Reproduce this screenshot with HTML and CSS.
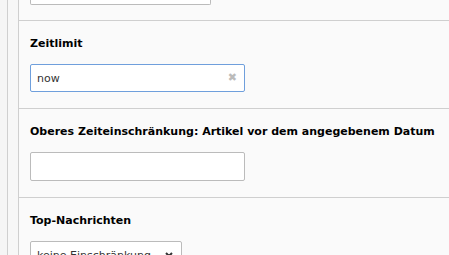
FILE: index.html
```html
<!DOCTYPE html>
<html lang="de">
<head>
    <meta charset="UTF-8">
    <title>Einstellungen</title>
    <link rel="stylesheet" href="styles.css">
</head>
<body>
    <div class="layout">
        <div class="rail"></div>
        <div class="rail inner"></div>
        <div class="form">
            <div class="section first">
                <div class="field empty top"></div>
            </div>
            <div class="section">
                <label for="limit">Zeitlimit</label>
                <div class="field active">
                    <input id="limit" type="text" value="now">
                    <span class="clear">&#10006;</span>
                </div>
            </div>
            <div class="section">
                <label for="upper">Oberes Zeiteinschränkung: Artikel vor dem angegebenem Datum</label>
                <div class="field">
                    <input id="upper" type="text" value="">
                </div>
            </div>
            <div class="section last">
                <label for="top">Top-Nachrichten</label>
                <div class="select">
                    <span>keine Einschränkung</span>
                    <svg width="8" height="6" viewBox="0 0 8 6"><path d="M1 1 L4 4 L7 1" fill="none" stroke="#333" stroke-width="2"/></svg>
                </div>
            </div>
        </div>
    </div>
</body>
</html>
```

FILE: styles.css
```css
body {
    margin: 0;
    background: #fafafa;
    font-family: "DejaVu Sans", Verdana, sans-serif;
    color: #000;
    overflow: hidden;
}
.layout {
    display: flex;
    height: 255px;
    overflow: hidden;
}
.rail {
    width: 7px;
    border-right: 1px solid #cfcfcf;
    background: #f5f5f5;
}
.rail.inner {
    width: 10px;
    background: #f7f7f7;
}
.form {
    flex: 1;
}
.section {
    padding: 16px 0 16px 11px;
    border-bottom: 1px solid #cfcfcf;
}
.section.first {
    padding-top: 0;
    height: 5px;
    padding-bottom: 15px;
}
.field.top {
    width: 179px;
    height: 4px;
    border: 1px solid #bbb;
    border-top: none;
    border-radius: 0 0 2px 2px;
    background: #fff;
}
label {
    display: block;
    font-size: 11px;
    font-weight: bold;
    line-height: 14px;
    margin-bottom: 13px;
    white-space: nowrap;
}
.field {
    position: relative;
    width: 215px;
}
.field input {
    box-sizing: border-box;
    width: 215px;
    height: 29px;
    border: 1px solid #bbb;
    border-radius: 2px;
    padding: 0 6px;
    font-family: "DejaVu Sans", Verdana, sans-serif;
    font-size: 11px;
    color: #333;
    background: #fff;
    outline: none;
}
.field.active input {
    height: 28px;
    border-color: #6f9fdc;
}
.clear {
    position: absolute;
    right: 8px;
    top: 7px;
    font-size: 11px;
    color: #bbb;
}
.select {
    box-sizing: border-box;
    width: 152px;
    height: 28px;
    border: 1px solid #bbb;
    border-radius: 2px;
    background: #fff;
    display: flex;
    align-items: center;
    justify-content: space-between;
    padding: 0 8px 0 6px;
    font-size: 11px;
    color: #333;
}
```
